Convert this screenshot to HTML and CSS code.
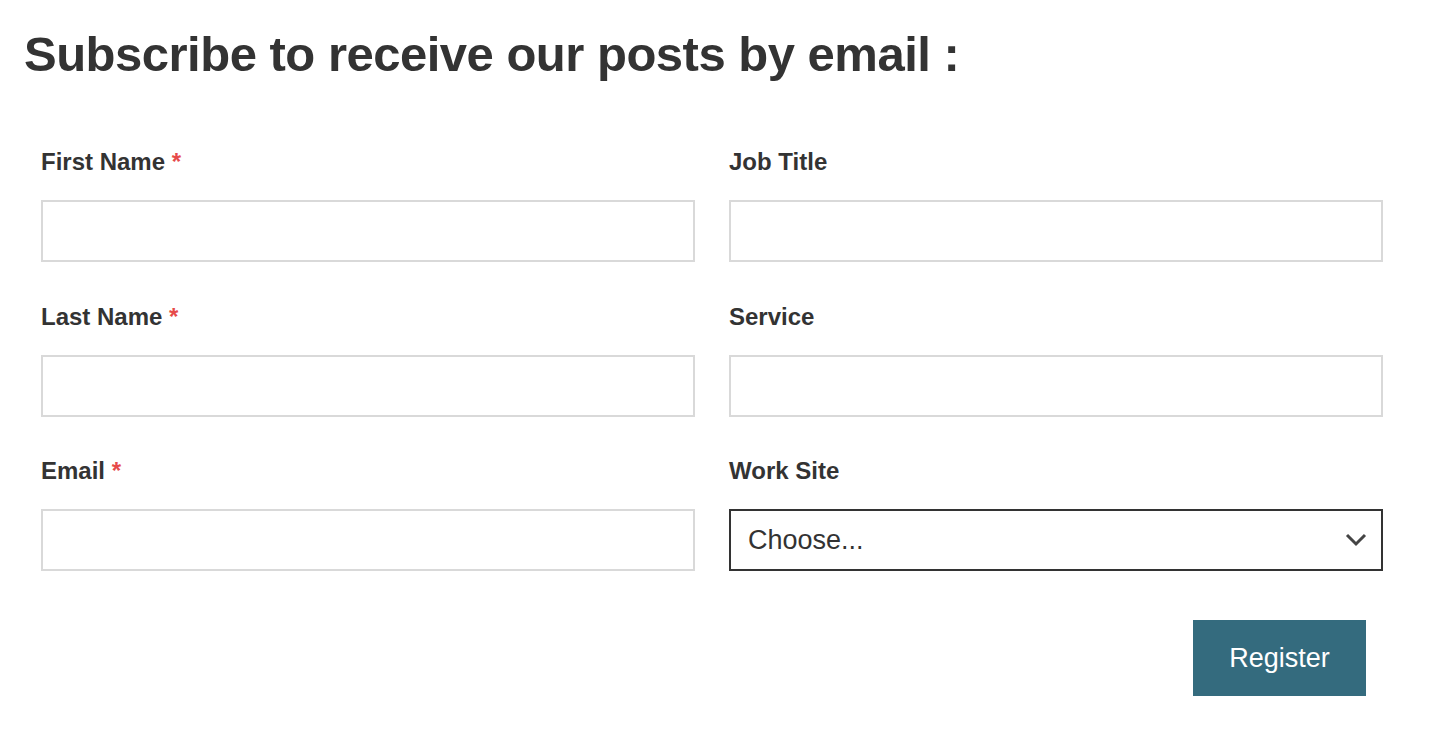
FILE: index.html
```html
<!DOCTYPE html>
<html lang="en">
<head>
<meta charset="utf-8">
<title>Subscribe</title>
<link rel="stylesheet" href="styles.css">
</head>
<body>
<div class="page">
  <h1 class="title">Subscribe to receive our posts by email :</h1>
  <form class="form">
    <div class="grid">
      <div class="field">
        <label class="label" for="fn">First Name <span class="req">*</span></label>
        <input class="input" id="fn" type="text">
      </div>
      <div class="field">
        <label class="label" for="jt">Job Title</label>
        <input class="input" id="jt" type="text">
      </div>
      <div class="field">
        <label class="label" for="ln">Last Name <span class="req">*</span></label>
        <input class="input" id="ln" type="text">
      </div>
      <div class="field">
        <label class="label" for="sv">Service</label>
        <input class="input" id="sv" type="text">
      </div>
      <div class="field">
        <label class="label" for="em">Email <span class="req">*</span></label>
        <input class="input" id="em" type="email">
      </div>
      <div class="field">
        <label class="label" for="ws">Work Site</label>
        <div class="select-wrap">
          <select class="select" id="ws">
            <option>Choose...</option>
          </select>
          <svg class="chevron" width="22" height="14" viewBox="0 0 22 14" aria-hidden="true">
            <path d="M2 2 L11 11 L20 2" fill="none" stroke="#444" stroke-width="3" stroke-linecap="butt" stroke-linejoin="miter"/>
          </svg>
        </div>
      </div>
    </div>
    <div class="actions">
      <button class="btn" type="button">Register</button>
    </div>
  </form>
</div>
</body>
</html>
```
FILE: styles.css
```css
html, body {
  margin: 0;
  padding: 0;
  background: #ffffff;
}

body {
  font-family: "Liberation Sans", Arial, sans-serif;
  color: #333333;
}

.page {
  padding: 24px 0 0 24px;
  width: 1359px;
}

.title {
  margin: 0;
  font-size: 49px;
  line-height: 61px;
  font-weight: 700;
  letter-spacing: -0.5px;
  color: #333333;
}

.form {
  padding: 61px 0 0 17px;
}

.grid {
  display: grid;
  grid-template-columns: 654px 654px;
  column-gap: 34px;
  row-gap: 38.5px;
}

.field {
  display: flex;
  flex-direction: column;
}

.label {
  font-size: 24px;
  line-height: 28px;
  font-weight: 700;
  color: #333333;
  margin-top: 2px;
  margin-bottom: 24px;
}

.req {
  color: #e64a4a;
}

.input {
  box-sizing: border-box;
  height: 62px;
  width: 100%;
  border: 2px solid #d9d9d9;
  border-radius: 0;
  background: #ffffff;
  font-family: "Liberation Sans", Arial, sans-serif;
  font-size: 27px;
  padding: 0 17px;
  margin: 0;
  outline: none;
}

.select-wrap {
  position: relative;
  height: 62px;
}

.select {
  box-sizing: border-box;
  -webkit-appearance: none;
  appearance: none;
  height: 62px;
  width: 100%;
  border: 2px solid #333333;
  border-radius: 0;
  background: #ffffff;
  color: #333333;
  font-family: "Liberation Sans", Arial, sans-serif;
  font-size: 27px;
  padding: 0 17px;
  margin: 0;
  outline: none;
}

.chevron {
  position: absolute;
  right: 16px;
  top: 24px;
  pointer-events: none;
}

.actions {
  display: flex;
  justify-content: flex-end;
  padding: 49px 17px 0 0;
}

.btn {
  width: 173px;
  height: 76px;
  border: 0;
  border-radius: 0;
  background: #346b7e;
  color: #ffffff;
  font-family: "Liberation Sans", Arial, sans-serif;
  font-size: 27px;
  padding: 0;
  margin: 0;
  cursor: pointer;
}
```
